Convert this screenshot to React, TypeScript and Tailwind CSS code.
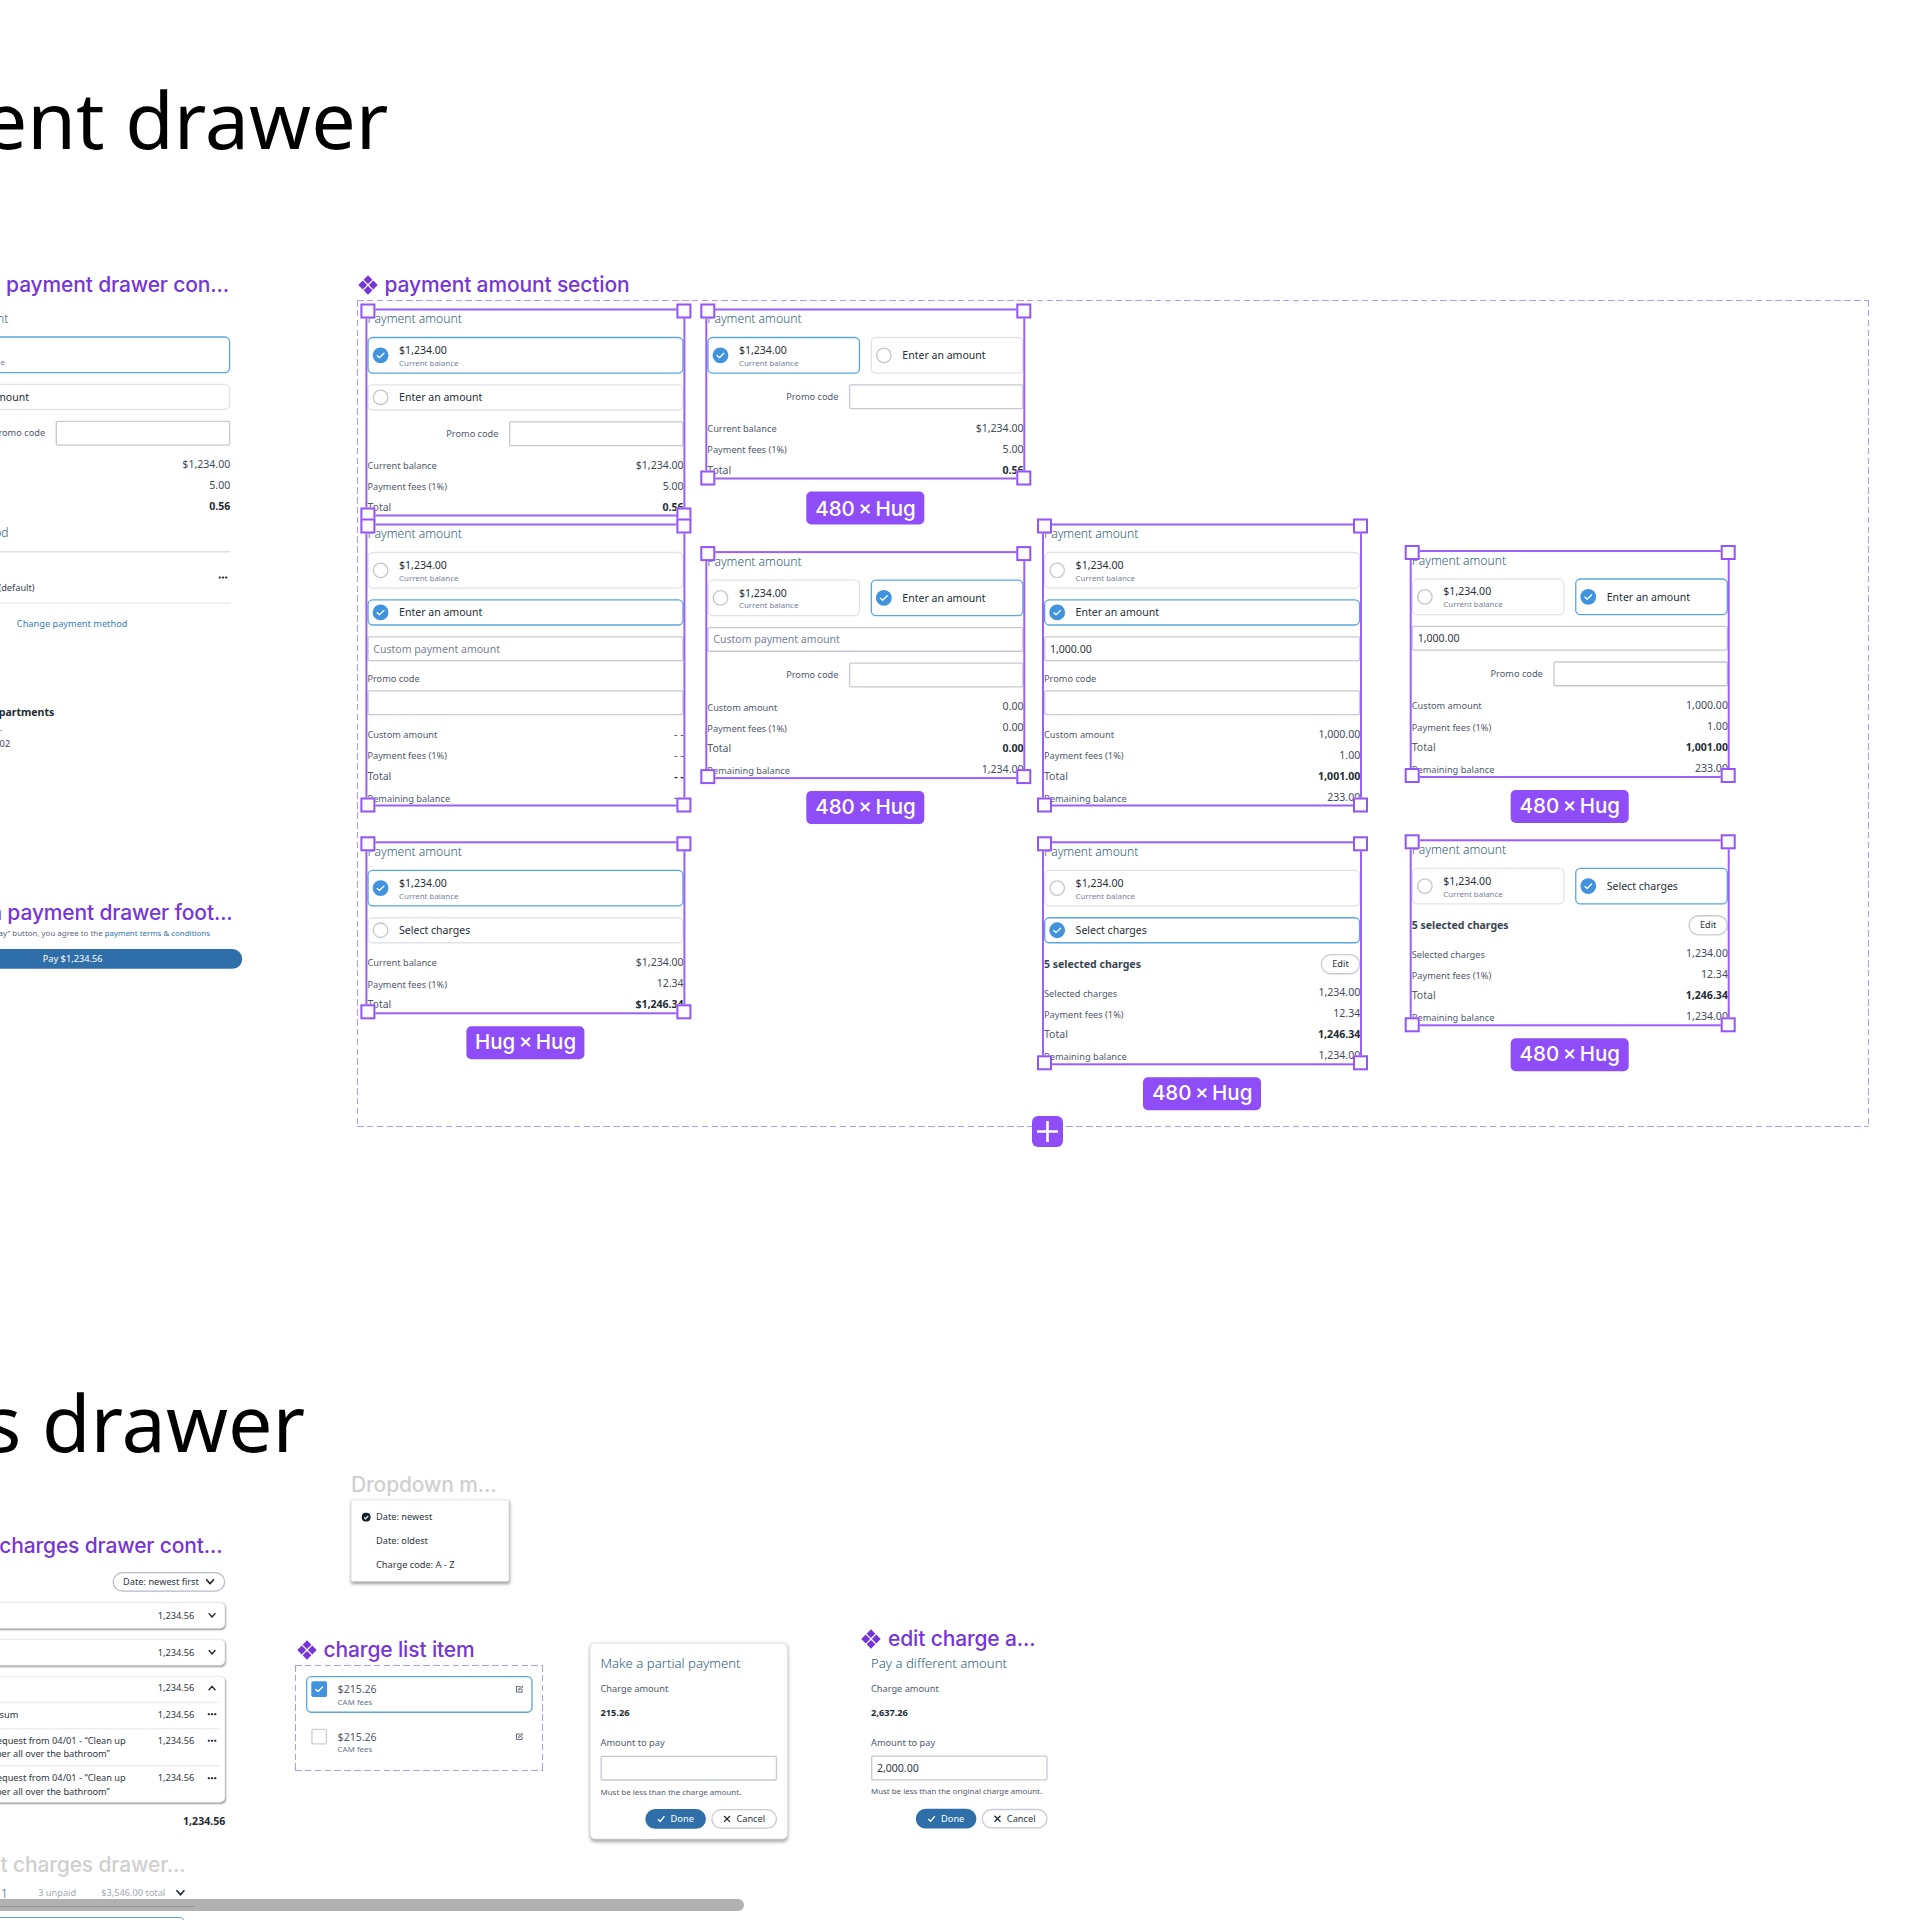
import type { ReactNode } from "react";

const NOTO = "font-['Noto_Sans',sans-serif]";

function Diamonds({ className }: { className: string }) {
  return (
    <svg viewBox="0 0 20 20" className={`h-5 w-5 shrink-0 ${className}`} fill="currentColor">
      <path d="M10 0.3 14.4 4.7 10 9.1 5.6 4.7Z" />
      <path d="M10 10.9 14.4 15.3 10 19.7 5.6 15.3Z" />
      <path d="M4.7 5.6 9.1 10 4.7 14.4 0.3 10Z" />
      <path d="M15.3 5.6 19.7 10 15.3 14.4 10.9 10Z" />
    </svg>
  );
}

function Label({ className, children, icon = false, muted = false }: { className: string; children: ReactNode; icon?: boolean; muted?: boolean }) {
  return (
    <div
      className={`absolute flex h-6 items-center gap-[7px] font-['Inter',sans-serif] text-[21px] leading-6 font-[450] tracking-[-0.14px] whitespace-nowrap ${
        muted ? "text-[#cfcfcf]" : "text-[#7635d8]"
      } ${className}`}
    >
      {icon && <Diamonds className="text-[#7635d8]" />}
      <span>{children}</span>
    </div>
  );
}

function DashedBox({ className, children }: { className: string; children?: ReactNode }) {
  const h =
    "absolute inset-x-0 h-[1.4px] bg-[repeating-linear-gradient(90deg,#b099f8_0_6.6px,transparent_6.6px_9.85px)]";
  const v =
    "absolute inset-y-0 w-[1.4px] bg-[repeating-linear-gradient(180deg,#b099f8_0_6.6px,transparent_6.6px_9.85px)]";
  return (
    <div className={`absolute ${className}`}>
      <div className={`${h} top-0`} />
      <div className={`${h} bottom-0`} />
      <div className={`${v} left-0`} />
      <div className={`${v} right-0`} />
      {children}
    </div>
  );
}

/* Artboard content is authored at 1:1 and shown at the canvas zoom level. */
function Zoomed({ className = "w-[480px]", children }: { className?: string; children: ReactNode }) {
  return <div className={`origin-top-left scale-[0.6588] ${NOTO} ${className}`}>{children}</div>;
}

function Handle({ className }: { className: string }) {
  return <div className={`absolute h-[15px] w-[15px] border-2 border-[#9354f8] bg-[#fcfbfe] ${className}`} />;
}

function Selected({ className, badge, children }: { className: string; badge?: string; children: ReactNode }) {
  return (
    <div className={`absolute w-[316.3px] ${className}`}>
      <Zoomed>{children}</Zoomed>
      <div className="absolute -inset-[2px] border-2 border-[#9a60f9]" />
      <Handle className="-top-[7.5px] -left-[7.5px]" />
      <Handle className="-top-[7.5px] -right-[7.5px]" />
      <Handle className="-bottom-[7.5px] -left-[7.5px]" />
      <Handle className="-right-[7.5px] -bottom-[7.5px]" />
      {badge && (
        <div className="absolute top-full left-1/2 mt-[14px] flex h-[33px] w-[118px] -translate-x-1/2 items-center justify-center rounded-[5px] bg-[#8e4df6] font-['Inter',sans-serif] text-[20.5px] font-medium [word-spacing:-2px] whitespace-nowrap text-white">
          {badge}
        </div>
      )}
    </div>
  );
}

function Radio({ on }: { on: boolean }) {
  return on ? (
    <div className="flex h-6 w-6 shrink-0 items-center justify-center rounded-full bg-[#4093dc]">
      <svg viewBox="0 0 24 24" className="h-6 w-6" fill="none" stroke="#fff" strokeWidth="2" strokeLinecap="round" strokeLinejoin="round">
        <path d="M6.8 12.4 10.2 15.6 17.2 8.8" />
      </svg>
    </div>
  ) : (
    <div className="h-6 w-6 shrink-0 rounded-full border-2 border-[#c0c7d2] bg-white" />
  );
}

function Choice({ on, children, big = false }: { on: boolean; children: ReactNode; big?: boolean }) {
  return (
    <div
      className={`flex w-full items-center gap-4 rounded-lg border-2 pl-[6px] ${big ? "h-14" : "h-10"} ${
        on ? "border-[#59a7e2]" : "border-[#dfe4e9]"
      }`}
    >
      <Radio on={on} />
      <div className="text-base leading-6 text-[#262f38]">{children}</div>
    </div>
  );
}

function Balance() {
  return (
    <>
      <div>$1,234.00</div>
      <div className="text-xs leading-4 text-[#77839a]">Current balance</div>
    </>
  );
}

function Choices({ row = false, first, other }: { row?: boolean; first: boolean; other: string }) {
  return (
    <div className={row ? "grid grid-cols-2 gap-4" : "flex flex-col gap-4"}>
      <Choice on={first} big>
        <Balance />
      </Choice>
      <Choice on={!first} big={row}>
        {other}
      </Choice>
    </div>
  );
}

function Field({ className = "", children }: { className?: string; children?: ReactNode }) {
  return (
    <div className={`flex h-[38px] items-center rounded-[3px] border-2 border-[#c3cad3] px-[7px] text-base text-[#2d3640] ${className}`}>
      {children}
    </div>
  );
}

function PromoInline() {
  return (
    <div className="flex items-center justify-end gap-4 text-sm text-[#4f5a6b]">
      Promo code
      <Field className="w-[265px]" />
    </div>
  );
}

function PromoStacked() {
  return (
    <div className="flex flex-col gap-2 text-sm leading-5 text-[#4f5a6b]">
      Promo code
      <Field />
    </div>
  );
}

function Rows({ rows }: { rows: [string, string][] }) {
  return (
    <div className="flex flex-col gap-2">
      {rows.map(([label, value]) => {
        const total = label === "Total";
        return (
          <div key={label} className="flex h-6 items-end justify-between text-[#4f5a6b]">
            <span className={total ? "text-base leading-6" : "text-sm leading-5"}>{label}</span>
            <span className={`text-base leading-6 ${total ? "font-bold text-[#222b33]" : "text-[#414b58]"}`}>{value}</span>
          </div>
        );
      })}
    </div>
  );
}

function ChargesHeader() {
  return (
    <div className="flex h-[30px] items-center justify-between">
      <span className="text-base font-bold text-[#3a4553]">5 selected charges</span>
      <span className="flex h-[31px] w-[60px] items-center justify-center rounded-full border-2 border-[#c5ccd5] text-sm text-[#2d3640]">
        Edit
      </span>
    </div>
  );
}

function Section({ children, title = "Payment amount" }: { children: ReactNode; title?: string }) {
  return (
    <div className="flex flex-col gap-4">
      <div className="text-[18.4px] leading-6 font-light text-[#2f6074]">{title}</div>
      {children}
    </div>
  );
}

function Dots() {
  return (
    <svg viewBox="0 0 14 4" className="h-1 w-3.5 shrink-0" fill="#2d3640">
      <circle cx="2" cy="2" r="1.8" />
      <circle cx="7" cy="2" r="1.8" />
      <circle cx="12" cy="2" r="1.8" />
    </svg>
  );
}

function Chevron({ up = false, className = "h-3 w-3" }: { up?: boolean; className?: string }) {
  return (
    <svg viewBox="0 0 12 12" className={`shrink-0 ${className}`} fill="none" stroke="#222b33" strokeWidth="2.2" strokeLinecap="round" strokeLinejoin="round">
      <path d={up ? "M1.5 8.8 6 3.6 10.5 8.8" : "M1.5 3.2 6 8.4 10.5 3.2"} />
    </svg>
  );
}

function PaymentDrawer() {
  return (
    <div className="absolute top-[310.4px] left-[-86.4px]">
      <Zoomed>
        <div className="flex flex-col gap-4">
          <Section>
            <Choices first other="Enter an amount" />
            <PromoInline />
            <Rows rows={[["Current balance", "$1,234.00"], ["Payment fees (1%)", "5.00"], ["Total", "0.56"]]} />
          </Section>
          <Section title="Payment method">
            <div className="flex h-20 items-center justify-between border-y-2 border-t-[#d6dce2] border-b-[#e6eaee] pr-1">
              <span className="mt-[31px] w-[183px] text-right text-sm leading-5 text-[#39434f]">Visa 1234 (default)</span>
              <Dots />
            </div>
            <div className="mt-[4px] text-center text-sm leading-5 text-[#3a80b8]">Change payment method</div>
          </Section>
        </div>
      </Zoomed>
    </div>
  );
}

function PayToAddress() {
  return (
    <div className="absolute top-[703.5px] left-[-86.4px]">
      <Zoomed className="w-[213px]">
        <div className="text-right text-base leading-6 font-bold text-[#222b33]">Sunset apartments</div>
        <div className="w-[134px] text-right text-sm leading-6 text-[#39434f]">123 Main St.</div>
        <div className="w-[146px] text-right text-sm leading-6 text-[#39434f]">Suite 102</div>
      </Zoomed>
    </div>
  );
}

function DrawerFooter() {
  return (
    <div className="absolute top-[928px] left-[-97.5px]">
      <Zoomed className="flex w-[515px] flex-col gap-4">
        <div className="w-[466px] text-right text-xs leading-4 whitespace-nowrap text-[#5b6675]">
          By clicking the “Pay” button, you agree to the <span className="text-[#2f74ab]">payment terms &amp; conditions</span>
        </div>
        <div className="flex h-[30px] items-center justify-center rounded-full bg-[#2f6fa9] text-sm text-white">Pay $1,234.56</div>
      </Zoomed>
    </div>
  );
}

function ChargeCard({ children }: { children: ReactNode }) {
  return (
    <div className="rounded-lg border border-[#e4e7ea] bg-white pr-2 shadow-[0_2px_3px_rgba(0,0,0,0.4)]">{children}</div>
  );
}

function ChargeRow({ icon, className, children }: { icon: ReactNode; className: string; children?: ReactNode }) {
  return (
    <div className={`flex items-start pr-1 text-sm leading-5 text-[#2d3640] ${className}`}>
      <div className="w-[328px] text-right whitespace-nowrap">{children}</div>
      <div className="ml-auto">1,234.56</div>
      <div className="ml-5 flex h-5 w-3.5 items-center justify-center">{icon}</div>
    </div>
  );
}

function Request() {
  return (
    <>
      <div>Request from 04/01 - “Clean up</div>
      <div className="mr-[24px]">paper all over the bathroom”</div>
    </>
  );
}

function ChargesDrawer() {
  return (
    <div className="absolute top-[1572px] left-[-91px]">
      <Zoomed className="flex w-[480px] flex-col gap-4">
        <div className="flex h-[30px] w-[171px] items-center justify-between self-end rounded-full border-2 border-[#b4bcc7] px-[14px] text-sm text-[#2d3640]">
          Date: newest first
          <Chevron className="h-3.5 w-3.5" />
        </div>
        <ChargeCard>
          <ChargeRow className="h-[38px] py-[9px]" icon={<Chevron />} />
        </ChargeCard>
        <ChargeCard>
          <ChargeRow className="h-[38px] py-[9px]" icon={<Chevron />} />
        </ChargeCard>
        <ChargeCard>
          <ChargeRow className="h-[38px] py-[7px]" icon={<Chevron up />} />
          <ChargeRow className="h-[40px] border-t-2 border-[#e6eaef] py-[7px]" icon={<Dots />}>
            <div className="mr-[163px]">Lorem ipsum</div>
          </ChargeRow>
          <ChargeRow className="h-[56px] border-t-2 border-[#e6eaef] py-[7px]" icon={<Dots />}>
            <Request />
          </ChargeRow>
          <ChargeRow className="h-[56px] border-t-2 border-[#e6eaef] py-[8px]" icon={<Dots />}>
            <Request />
          </ChargeRow>
        </ChargeCard>
        <div className="text-right text-base leading-6 font-bold text-[#222b33]">1,234.56</div>
      </Zoomed>
    </div>
  );
}

function DropdownMenu() {
  return (
    <div className="absolute top-[1500px] left-[351px]">
      <Zoomed className="w-[240px]">
        <div className="flex flex-col rounded-[3px] border border-[#e9e9e9] bg-white py-[7px] text-sm leading-9 text-[#2d3640] shadow-[0_3px_5px_rgba(0,0,0,0.38)]">
          {["Date: newest", "Date: oldest", "Charge code: A - Z"].map((item, i) => (
            <div key={item} className="flex h-9 items-center gap-2 pl-[15px]">
              <svg viewBox="0 0 14 14" className="h-3.5 w-3.5" fill="none">
                {i === 0 && (
                  <>
                    <circle cx="7" cy="7" r="7" fill="#16202a" />
                    <path d="M4 7.3 6.2 9.5 10.2 5" stroke="#fff" strokeWidth="1.8" />
                  </>
                )}
              </svg>
              {item}
            </div>
          ))}
        </div>
      </Zoomed>
    </div>
  );
}

function ChargeItem({ on }: { on: boolean }) {
  return (
    <div className={`flex h-14 w-[344px] rounded-lg border-2 ${on ? "border-[#59a7e2]" : "border-transparent"}`}>
      {on ? (
        <div className="mt-[6px] ml-[6px] flex h-6 w-6 items-center justify-center rounded-[3px] bg-[#4093dc]">
          <svg viewBox="0 0 24 24" className="h-6 w-6" fill="none" stroke="#fff" strokeWidth="2" strokeLinecap="round" strokeLinejoin="round">
            <path d="M6.8 12.4 10.2 15.6 17.2 8.8" />
          </svg>
        </div>
      ) : (
        <div className="mt-[6px] ml-[6px] h-6 w-6 rounded-[3px] border-2 border-[#c9cfd7]" />
      )}
      <div className="mt-[6px] ml-4 flex-1 text-base leading-6 text-[#4f5a6b]">
        $215.26
        <div className="text-xs leading-4 text-[#6b7688]">CAM fees</div>
      </div>
      <svg viewBox="0 0 12 12" className="mt-[12px] mr-[12px] h-3 w-3" fill="none" stroke="#4f5a6b" strokeWidth="1.4">
        <path d="M6.5 2H1.5V10.5H10V6" />
        <path d="M4.5 7.5 5 5.6 9.6 1 11.2 2.6 6.4 7.2Z" />
      </svg>
    </div>
  );
}

function AmountForm({ title, value, input = "", hint }: { title: string; value: string; input?: string; hint: string }) {
  return (
    <div className="flex flex-col text-sm leading-5 text-[#4f5a6b]">
      <div className="text-xl leading-7 font-light text-[#2f6074]">{title}</div>
      <div className="mt-[15px]">Charge amount</div>
      <div className="mt-4 font-bold text-[#222b33]">{value}</div>
      <div className="mt-[26px]">Amount to pay</div>
      <Field className="mt-[9px]">{input}</Field>
      <div className="mt-[9px] text-xs leading-4 whitespace-nowrap">{hint}</div>
      <div className="mt-[18px] flex justify-end gap-2 text-[#2d3640]">
        <div className="flex h-[30px] w-[92px] items-center justify-center gap-2 rounded-full bg-[#2f6fa9] text-white">
          <svg viewBox="0 0 12 12" className="h-3 w-3" fill="none" stroke="#fff" strokeWidth="2">
            <path d="M1 6.5 4.5 10 11 2" />
          </svg>
          Done
        </div>
        <div className="flex h-[30px] w-[100px] items-center justify-center gap-2 rounded-full border-2 border-[#c5ccd5]">
          <svg viewBox="0 0 12 12" className="h-3 w-3" fill="none" stroke="#222b33" strokeWidth="2">
            <path d="M1.5 1.5 10.5 10.5M10.5 1.5 1.5 10.5" />
          </svg>
          Cancel
        </div>
      </div>
    </div>
  );
}

const enteredRows: [string, string][] = [
  ["Custom amount", "1,000.00"],
  ["Payment fees (1%)", "1.00"],
  ["Total", "1,001.00"],
  ["Remaining balance", "233.00"],
];
const selectedRows: [string, string][] = [
  ["Selected charges", "1,234.00"],
  ["Payment fees (1%)", "12.34"],
  ["Total", "1,246.34"],
  ["Remaining balance", "1,234.00"],
];
const balanceRows: [string, string][] = [
  ["Current balance", "$1,234.00"],
  ["Payment fees (1%)", "5.00"],
  ["Total", "0.56"],
];

export default function App() {
  return (
    <div className="relative h-[1920px] w-[1920px] overflow-hidden bg-white">
      <div className={`absolute top-[69px] right-[1531.6px] text-[79px] leading-[100px] whitespace-nowrap text-black ${NOTO}`}>ent drawer</div>
      <div className={`absolute top-[1372px] right-[1614.8px] text-[79px] leading-[100px] whitespace-nowrap text-black ${NOTO}`}>s drawer</div>

      <Label className="top-[273px] right-[1691px]">n payment drawer con...</Label>
      <PaymentDrawer />
      <PayToAddress />
      <Label className="top-[900.6px] right-[1687.4px]">n payment drawer foot...</Label>
      <DrawerFooter />

      <Label icon className="top-[273px] left-[357.5px]">payment amount section</Label>
      <DashedBox className="top-[299.6px] left-[356.6px] h-[827.4px] w-[1512.6px]" />

      <Selected className="top-[310px] left-[367px] h-[204.4px] translate-x-[0.4px] translate-y-[0.5px]">
        <Section>
          <Choices first other="Enter an amount" />
          <PromoInline />
          <Rows rows={balanceRows} />
        </Section>
      </Selected>
      <Selected className="top-[310px] left-[707px] h-[167.4px] translate-x-[0.3px] translate-y-[0.5px]" badge="480 × Hug">
        <Section>
          <Choices row first other="Enter an amount" />
          <PromoInline />
          <Rows rows={balanceRows} />
        </Section>
      </Selected>
      <Selected className="top-[525px] left-[367px] h-[279.4px] translate-x-[0.4px] translate-y-[0.5px]">
        <Section>
          <Choices first={false} other="Enter an amount" />
          <Field><span className="text-[#768296]">Custom payment amount</span></Field>
          <PromoStacked />
          <Rows rows={[["Custom amount", "- -"], ["Payment fees (1%)", "- -"], ["Total", "- -"], ["Remaining balance", "- -"]]} />
        </Section>
      </Selected>
      <Selected className="top-[553px] left-[707px] h-[223.9px] translate-x-[0.3px] translate-y-[0.1px]" badge="480 × Hug">
        <Section>
          <Choices row first={false} other="Enter an amount" />
          <Field><span className="text-[#768296]">Custom payment amount</span></Field>
          <PromoInline />
          <Rows rows={[["Custom amount", "0.00"], ["Payment fees (1%)", "0.00"], ["Total", "0.00"], ["Remaining balance", "1,234.00"]]} />
        </Section>
      </Selected>
      <Selected className="top-[525px] left-[1044px] h-[279.4px] translate-y-[0.5px]">
        <Section>
          <Choices first={false} other="Enter an amount" />
          <Field>1,000.00</Field>
          <PromoStacked />
          <Rows rows={enteredRows} />
        </Section>
      </Selected>
      <Selected className="top-[552px] left-[1411px] h-[223.9px] translate-x-[0.7px]" badge="480 × Hug">
        <Section>
          <Choices row first={false} other="Enter an amount" />
          <Field>1,000.00</Field>
          <PromoInline />
          <Rows rows={enteredRows} />
        </Section>
      </Selected>
      <Selected className="top-[843px] left-[367px] h-[168.5px] translate-x-[0.4px] translate-y-[0.3px]" badge="Hug × Hug">
        <Section>
          <Choices first other="Select charges" />
          <Rows rows={[["Current balance", "$1,234.00"], ["Payment fees (1%)", "12.34"], ["Total", "$1,246.34"]]} />
        </Section>
      </Selected>
      <Selected className="top-[843px] left-[1044px] h-[219.7px] translate-y-[0.3px]" badge="480 × Hug">
        <Section>
          <Choices first={false} other="Select charges" />
          <ChargesHeader />
          <Rows rows={selectedRows} />
        </Section>
      </Selected>
      <Selected className="top-[841px] left-[1411px] h-[183px] translate-x-[0.7px] translate-y-[0.3px]" badge="480 × Hug">
        <Section>
          <Choices row first={false} other="Select charges" />
          <ChargesHeader />
          <Rows rows={selectedRows} />
        </Section>
      </Selected>

      <div className="absolute top-[1115.6px] left-[1032.2px] flex h-[31px] w-[31px] items-center justify-center rounded-[6px] bg-[#8e4df6]">
        <svg viewBox="0 0 21 21" className="h-[21px] w-[21px]" stroke="#fff" strokeWidth="2.6">
          <path d="M10.5 0V21M0 10.5H21" />
        </svg>
      </div>

      <Label className="top-[1534px] right-[1697.5px]">t charges drawer cont...</Label>
      <ChargesDrawer />

      <Label muted className="top-[1473.4px] left-[351px]">Dropdown m...</Label>
      <DropdownMenu />

      <Label icon className="top-[1638px] left-[296.6px]">charge list item</Label>
      <DashedBox className="top-[1665px] left-[295px] h-[106.4px] w-[248px]">
        <div className="absolute top-[11px] left-[10.8px]">
          <Zoomed className="flex w-[344px] flex-col gap-4">
            <ChargeItem on />
            <ChargeItem on={false} />
          </Zoomed>
        </div>
      </DashedBox>

      <div className="absolute top-[1642.7px] left-[590px]">
        <Zoomed className="w-[300px]">
          <div className="rounded-lg border border-[#e4e7ea] bg-white px-[15px] pt-4 pb-[15px] shadow-[0_3px_6px_rgba(0,0,0,0.35)]">
            <AmountForm title="Make a partial payment" value="215.26" hint="Must be less than the charge amount." />
          </div>
        </Zoomed>
      </div>

      <Label icon className="top-[1627px] left-[861px]">edit charge a...</Label>
      <div className="absolute top-[1653.9px] left-[871.4px]">
        <Zoomed className="w-[268px]">
          <AmountForm title="Pay a different amount" value="2,637.26" input="2,000.00" hint="Must be less than the original charge amount." />
        </Zoomed>
      </div>

      <Label muted className="top-[1853px] right-[1734.5px]">t charges drawer...</Label>
      <div className="absolute top-[1885px] left-[-60px]">
        <Zoomed className="flex h-6 w-[372px] items-center text-sm text-[#a2a9b1]">
          <span className="w-[103px] text-right text-lg font-light text-[#2f6074]">Lease 1</span>
          <span className="ml-[46px]">3 unpaid</span>
          <span className="ml-[38px]">$3,546.00 total</span>
          <Chevron className="ml-auto h-3.5 w-3.5" />
        </Zoomed>
      </div>
      <div className="absolute top-[1906px] left-0 h-[1px] w-[195px] bg-[#5b6670]" />
      <div className="absolute top-[1917px] left-[-60px] h-10 w-[244.5px] rounded-[5px] border-[1.3px] border-[#59a7e2]" />
      <div className="absolute top-[1899px] left-[-10px] h-[11.6px] w-[754px] rounded-full bg-[#9d9d9d]/80" />
    </div>
  );
}
